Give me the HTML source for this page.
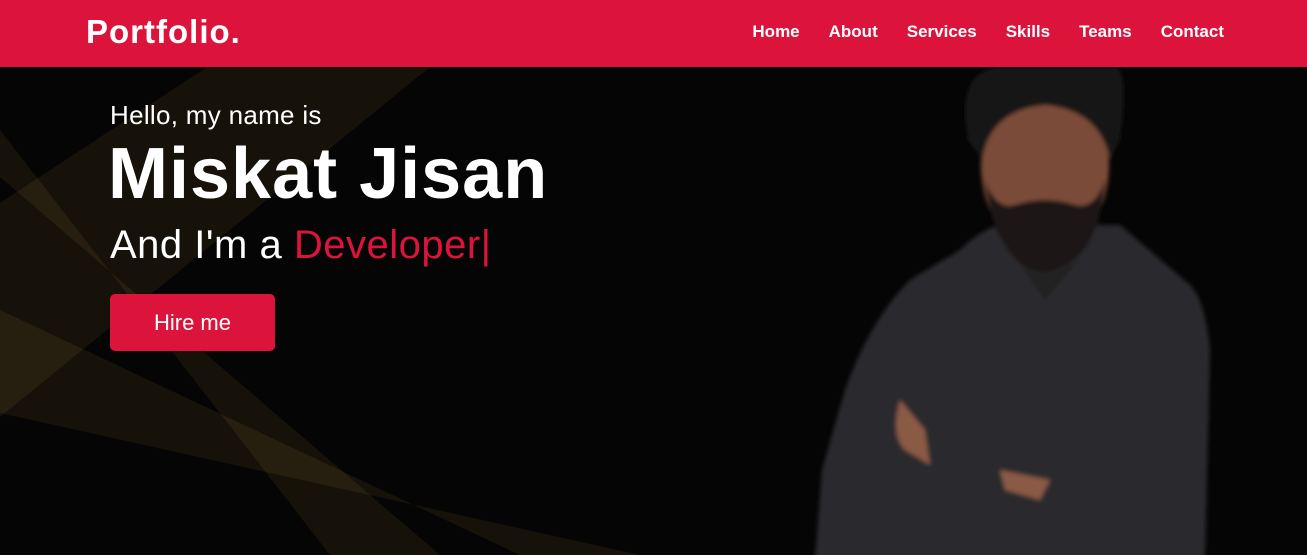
<!DOCTYPE html>
<html><head><meta charset="utf-8"><style>
*{margin:0;padding:0;box-sizing:border-box}
body{width:1307px;height:559px;background:#fff;font-family:"Liberation Sans","DejaVu Sans",sans-serif;overflow:hidden;position:relative}
.nav{position:absolute;top:0;left:0;width:1307px;height:67px;background:#dc143c}
.logo{position:absolute;left:86px;top:13px;color:#fff;font-size:33px;font-weight:bold;letter-spacing:1px}
.links{position:absolute;right:83px;top:22px;display:flex;gap:29px}
.links span{color:#fff;font-size:17px;font-weight:bold}
.hero{position:absolute;top:67px;left:0;width:1307px;height:488px;background:#050505;overflow:hidden}
.t{position:absolute;color:#fff;white-space:nowrap}
.btn{position:absolute;left:110px;width:165px;height:57px;background:#dc143c;border-radius:5px;color:#fff;font-size:22px;text-align:center;line-height:57px}
</style></head><body>
<div class="hero">
<svg width="1307" height="488" style="position:absolute;left:0;top:0">
<defs><filter id="b"><feGaussianBlur stdDeviation="2"/></filter></defs>
<g fill="#c9a040" fill-opacity="0.09">
<polygon points="207,0 430,0 0,350 0,136"/>
<polygon points="0,63 0,110 440,488 330,488"/>
<polygon points="0,243 0,346 640,488 520,488"/>
</g>
<g filter="url(#b)" transform="translate(0,-67)">
<path d="M1000,225 Q980,230 960,250 L910,280 Q870,320 845,390 L822,470 L815,560 L1205,560 L1210,350 Q1205,300 1190,285 L1120,225 Z" fill="#2b2a2d"/>
<ellipse cx="1045" cy="165" rx="64" ry="88" fill="#7a4c38"/>
<path d="M968,140 Q955,70 1000,67 L1115,67 Q1130,70 1120,140 L1110,160 Q1100,110 1045,105 Q990,110 982,160 Z" fill="#121212"/>
<path d="M985,180 Q995,268 1045,272 Q1098,266 1105,180 Q1095,210 1075,205 Q1045,195 1015,205 Q995,210 985,180Z" fill="#1a1412"/>
<path d="M1000,235 L1045,300 L1100,235 Q1075,272 1045,272 Q1015,270 1000,235Z" fill="#222"/>
<path d="M900,400 Q890,435 905,450 L930,465 L925,430 Z" fill="#8a5a45"/>
<path d="M1000,470 L1050,480 L1040,500 L1005,490Z" fill="#8a5a45"/>
</g>
</svg>
<div class="t" style="left:110px;top:33px;font-size:26px;letter-spacing:0.3px">Hello, my name is</div>
<div class="t" style="left:108px;top:66px;font-size:72px;font-weight:bold;letter-spacing:1px">Miskat Jisan</div>
<div class="t" style="left:110px;top:156px;font-size:40px;letter-spacing:0.5px">And I'm a <span style="color:#dc143c">Developer|</span></div>
<div class="btn" style="top:227px">Hire me</div>
</div>
<div class="nav"><div class="logo">Portfolio.</div>
<div class="links"><span>Home</span><span>About</span><span>Services</span><span>Skills</span><span>Teams</span><span>Contact</span></div></div>
</body></html>
